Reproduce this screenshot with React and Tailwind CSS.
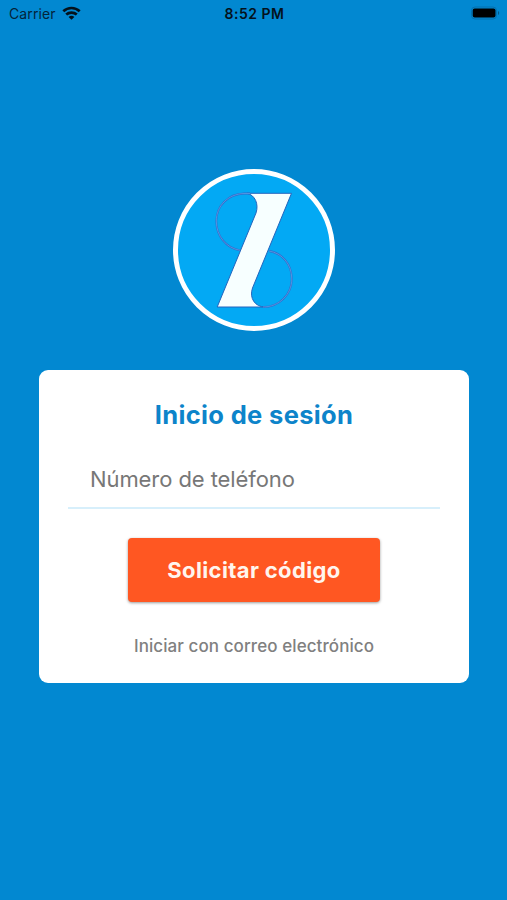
function StatusBar() {
  return (
    <div className="grid h-7 grid-cols-3 items-center pl-[9px] pr-[7px] text-[14px] leading-none text-[#04243a]">
      <div className="flex items-center gap-[6px]">
        <span className="tracking-[0.1px]">Carrier</span>
        <svg className="-mt-[2px]" width="19" height="14" viewBox="0 0 19 14" fill="none" stroke="#04121c" strokeWidth="2.7">
          <path d="M1.3 5.2C6 .9 13 .9 17.7 5.2" />
          <path d="M4.2 8.6C7.2 5.9 11.8 5.9 14.8 8.6" />
          <path d="M9.5 13.7L6.6 10.9C8.3 9.5 10.7 9.5 12.4 10.9Z" fill="#04121c" stroke="none" />
        </svg>
      </div>
      <span className="text-center font-semibold tracking-[0.5px] text-[#04121c]">8:52 PM</span>
      <svg className="-mt-[2px] justify-self-end" width="29" height="14" viewBox="0 0 29 14">
        <rect x="0.5" y="1" width="25" height="12" rx="3.5" fill="none" stroke="#0470ae" />
        <rect x="1.7" y="2.4" width="22.8" height="9.2" rx="2" fill="#000" />
        <path d="M27 5v4c1.6-.6 1.6-3.4 0-4z" fill="#04598a" />
      </svg>
    </div>
  );
}

function Logo() {
  return (
    <div className="size-[162px] rounded-full border-[5px] border-white bg-[#03a9f4]">
      <svg className="size-full" viewBox="14 14 152 152" fill="none" strokeLinejoin="round">
        <path
          d="M83 33.3H127.5L88.5 128C85 138 91 147 101 147H53.2L92 53C95 44 91 35 83 33.3Z"
          fill="#f7ffff"
          stroke="#2465bd"
          strokeWidth="1"
        />
        <g stroke="#3069c8" strokeWidth="1.8">
          <path d="M86 33.5H80C64 34 52.3 46 52.3 61C52.3 76 62 88 76 90.3" />
          <path d="M105 91C118 93 127.8 104 127.8 119C127.8 134.500 115 147 99 147" />
        </g>
        <g stroke="#6bafee" strokeWidth="0.6">
          <path d="M86 33.5H80C64 34 52.3 46 52.3 61C52.3 76 62 88 76 90.3" />
          <path d="M105 91C118 93 127.8 104 127.8 119C127.8 134.500 115 147 99 147" />
        </g>
      </svg>
    </div>
  );
}

export default function App() {
  return (
    <div className="flex h-[900px] w-[507px] flex-col overflow-hidden bg-[#0288d1] font-['Inter',sans-serif]">
      <StatusBar />
      <main className="flex flex-col items-center pl-px pt-[141px]">
        <Logo />
        <form className="mt-[39px] flex h-[313px] w-[430px] flex-col items-center rounded-[9px] bg-white px-[29px] pt-[27px]">
          <h1 className="h-9 whitespace-nowrap text-[25.5px] font-bold leading-9 tracking-[0.35px] text-[#0d84ca]">Inicio de sesión</h1>
          <input
            type="tel"
            placeholder="Número de teléfono"
            className="mt-[17px] h-[59px] w-full border-b-[2px] border-[#d7effb] px-[22px] text-[22px] tracking-[-0.08px] text-[#777] outline-none placeholder:text-[#777]"
          />
          <button
            type="button"
            className="mt-[29px] h-[64px] w-[252px] shrink-0 whitespace-nowrap rounded-[4px] bg-[#ff5722] text-[22px] font-bold tracking-[0.36px] text-[#fff5ee] shadow-[0_1px_3px_rgba(0,0,0,0.4)]"
          >
            Solicitar código
          </button>
          <a className="mt-[32px] whitespace-nowrap text-[17px] font-medium leading-6 tracking-[0.08px] text-[#808080]">Iniciar con correo electrónico</a>
        </form>
      </main>
    </div>
  );
}
